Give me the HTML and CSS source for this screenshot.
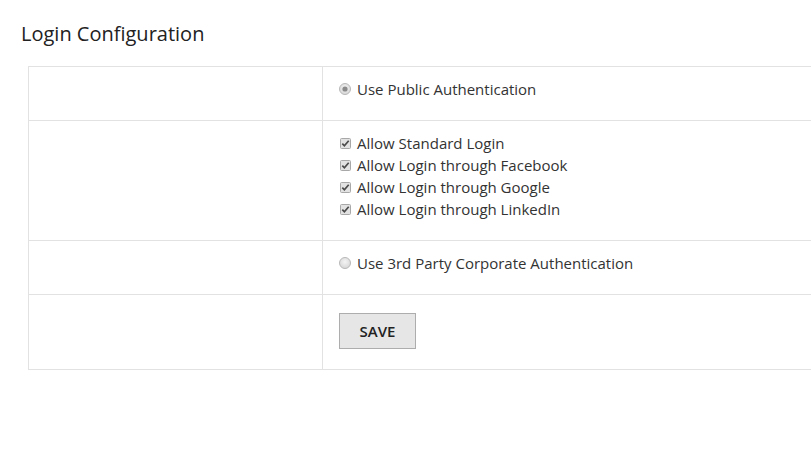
FILE: index.html
```html
<!DOCTYPE html>
<html>
<head>
<meta charset="utf-8">
<link rel="stylesheet" href="styles.css">
</head>
<body>
<h1 class="title">Login Configuration</h1>
<div class="wrap">
  <table class="config">
    <tr>
      <td class="label"></td>
      <td class="value">
        <label class="opt"><svg class="ico" width="12" height="12" viewBox="0 0 12 12"><defs><radialGradient id="rg" cx="50%" cy="40%" r="60%"><stop offset="0" stop-color="#f4f4f4"/><stop offset="1" stop-color="#d6d6d6"/></radialGradient></defs><circle cx="6" cy="6" r="5.5" fill="url(#rg)" stroke="#b8b8b8"/><circle cx="6" cy="6" r="2.6" fill="#8a8a8a"/></svg>Use Public Authentication</label>
      </td>
    </tr>
    <tr>
      <td class="label"></td>
      <td class="value">
        <label class="opt"><svg class="ico cb" width="11" height="11" viewBox="0 0 11 11"><rect x="0.5" y="0.5" width="10" height="10" rx="1" fill="#e2e2e2" stroke="#a8a8a8"/><path d="M2.3 5.6 L4.4 7.8 L8.7 2.8" fill="none" stroke="#4a4a4a" stroke-width="1.7"/></svg>Allow Standard Login</label>
        <label class="opt"><svg class="ico cb" width="11" height="11" viewBox="0 0 11 11"><rect x="0.5" y="0.5" width="10" height="10" rx="1" fill="#e2e2e2" stroke="#a8a8a8"/><path d="M2.3 5.6 L4.4 7.8 L8.7 2.8" fill="none" stroke="#4a4a4a" stroke-width="1.7"/></svg>Allow Login through Facebook</label>
        <label class="opt"><svg class="ico cb" width="11" height="11" viewBox="0 0 11 11"><rect x="0.5" y="0.5" width="10" height="10" rx="1" fill="#e2e2e2" stroke="#a8a8a8"/><path d="M2.3 5.6 L4.4 7.8 L8.7 2.8" fill="none" stroke="#4a4a4a" stroke-width="1.7"/></svg>Allow Login through Google</label>
        <label class="opt"><svg class="ico cb" width="11" height="11" viewBox="0 0 11 11"><rect x="0.5" y="0.5" width="10" height="10" rx="1" fill="#e2e2e2" stroke="#a8a8a8"/><path d="M2.3 5.6 L4.4 7.8 L8.7 2.8" fill="none" stroke="#4a4a4a" stroke-width="1.7"/></svg>Allow Login through LinkedIn</label>
      </td>
    </tr>
    <tr>
      <td class="label"></td>
      <td class="value">
        <label class="opt"><svg class="ico" width="12" height="12" viewBox="0 0 12 12"><defs><radialGradient id="rg2" cx="50%" cy="40%" r="60%"><stop offset="0" stop-color="#f4f4f4"/><stop offset="1" stop-color="#d6d6d6"/></radialGradient></defs><circle cx="6" cy="6" r="5.5" fill="url(#rg2)" stroke="#b8b8b8"/></svg>Use 3rd Party Corporate Authentication</label>
      </td>
    </tr>
    <tr>
      <td class="label"></td>
      <td class="value btncell">
        <button class="save">SAVE</button>
      </td>
    </tr>
  </table>
</div>
</body>
</html>
```
FILE: styles.css
```css
html, body {
  margin: 0;
  padding: 0;
  background: #fff;
  overflow: hidden;
}
body {
  font-family: "Open Sans", "Liberation Sans", sans-serif;
  color: #333;
  font-size: 15px;
}
.title {
  font-size: 20px;
  font-weight: 400;
  margin: 0;
  padding: 20px 0 0 21px;
  line-height: 28px;
  color: #222;
}
.wrap {
  padding: 18px 0 0 28px;
  overflow: hidden;
}
.config {
  border-collapse: collapse;
  width: calc(100% + 2px);
}
.config td {
  border: 1px solid #e2e2e2;
  vertical-align: top;
}
.label {
  width: 291px;
}
.value {
  padding: 11px 0 20px 16px;
}
.opt {
  display: flex;
  align-items: center;
  line-height: 22px;
  height: 22px;
  color: #333;
}
.ico {
  margin-right: 6px;
  flex: none;
}
.cb {
  margin-left: 1px;
  margin-right: 6px;
}
.btncell {
  padding: 18px 0 20px 16px;
}
.save {
  font-family: "Open Sans", "Liberation Sans", sans-serif;
  font-size: 15px;
  font-weight: 600;
  color: #222;
  background: #e6e6e6;
  border: 1px solid #adadad;
  width: 77px;
  height: 36px;
  padding: 0;
  display: block;
}
```
